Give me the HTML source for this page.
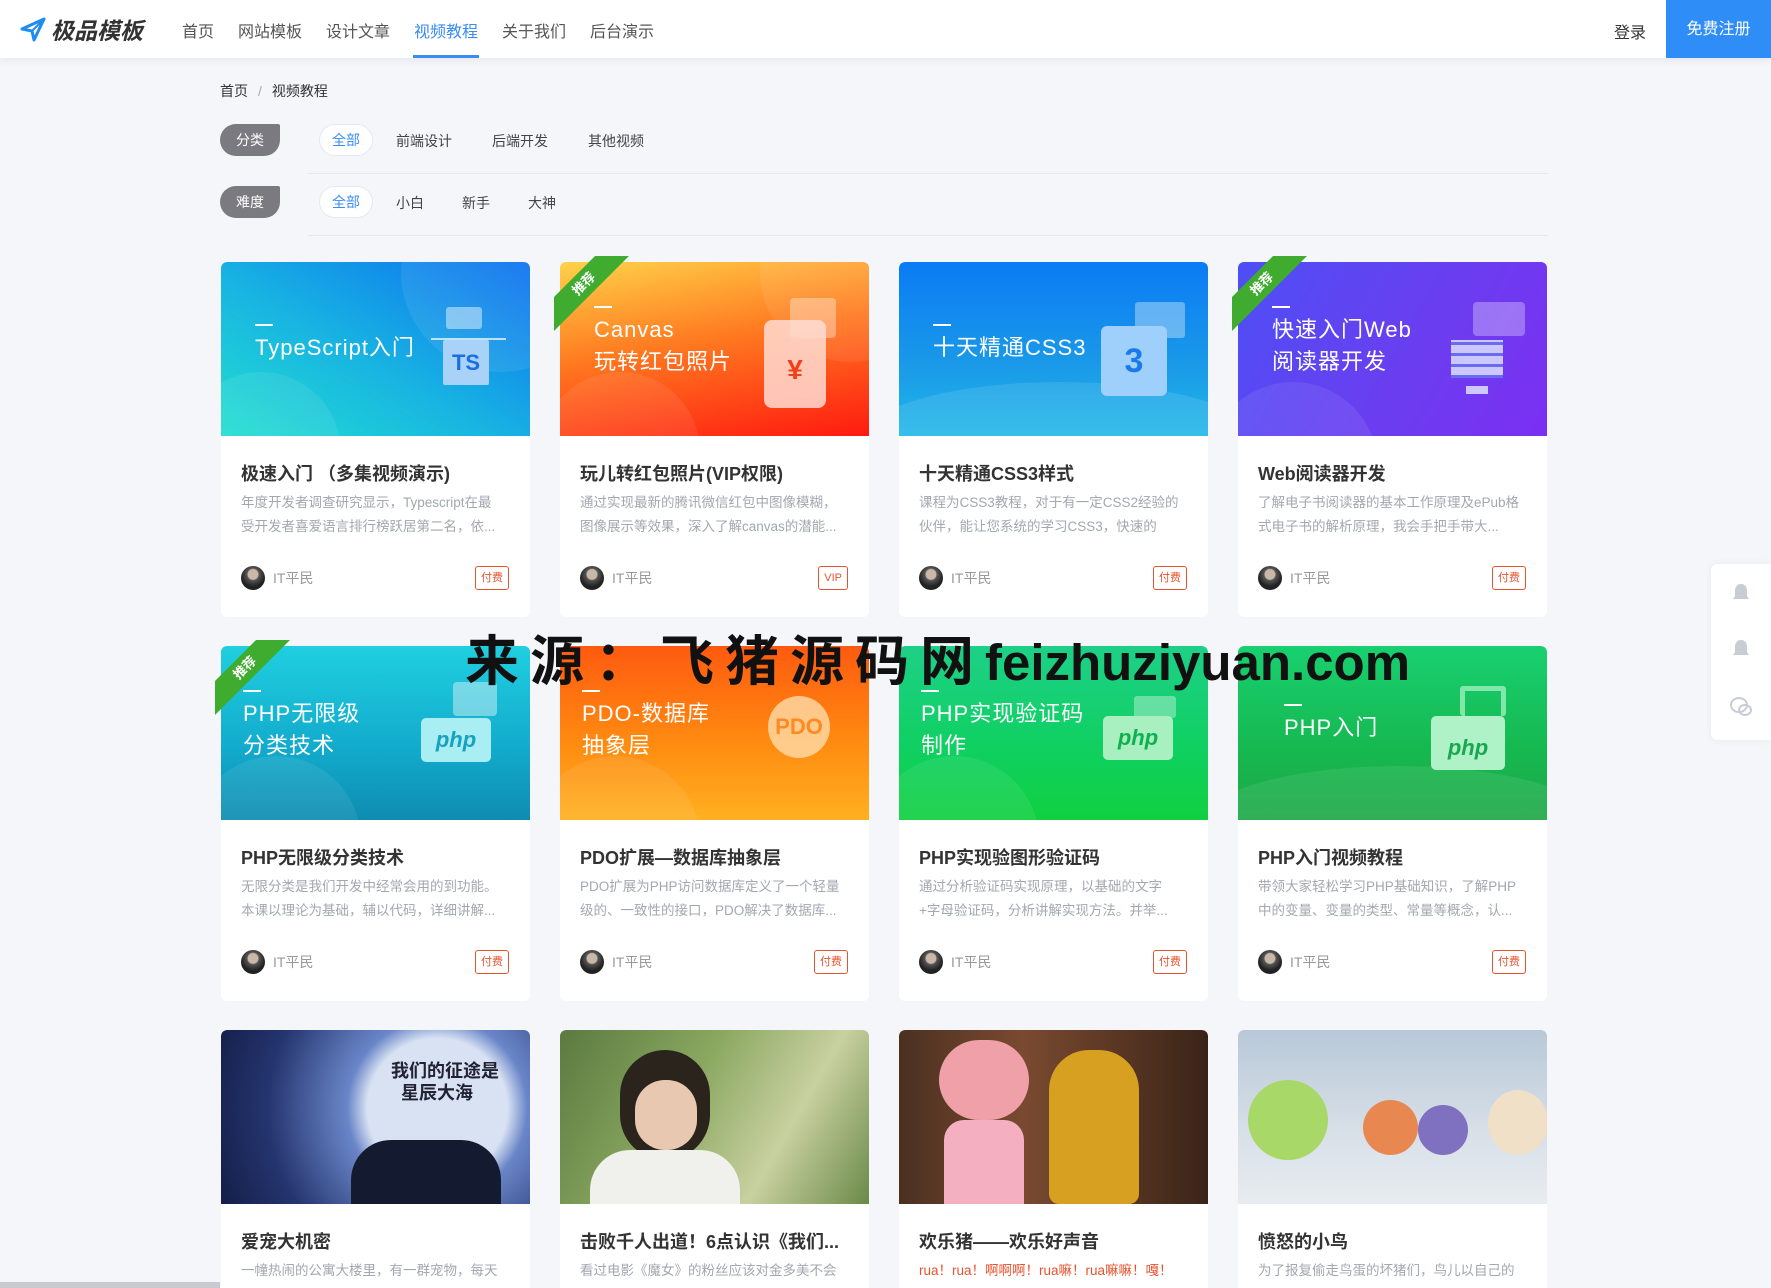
<!DOCTYPE html>
<html style="height:1288px;overflow:hidden"><head><meta charset="utf-8">
<style>
*{margin:0;padding:0;box-sizing:border-box}
body{width:1771px;height:1288px;overflow:hidden;background:#f5f6fa;font-family:"Liberation Sans","Noto Sans CJK SC",sans-serif;position:relative;color:#333}
.hdr{position:absolute;left:0;top:0;width:1771px;height:58px;background:#fff;box-shadow:0 2px 8px rgba(0,20,60,.07);z-index:2}
.logo{position:absolute;left:20px;top:12px;height:34px;display:flex;align-items:center}
.logo b{font-size:23px;font-style:italic;color:#333;letter-spacing:0;margin-left:5px}
.nav a{position:absolute;top:18px;font-size:16px;color:#555;text-decoration:none}
.nav a.on{color:#3a8cf5}
.uline{position:absolute;left:413px;top:55px;width:66px;height:3px;background:#3a8cf5}
.login{position:absolute;left:1614px;top:19px;font-size:16px;color:#333}
.reg{position:absolute;left:1666px;top:0;width:105px;height:58px;background:#2e8df7;color:#fff;font-size:16px;text-align:center;line-height:60px}
.bc{position:absolute;left:220px;top:81px;font-size:14px;color:#333}
.bc span{color:#aaa;margin:0 10px}
.lab{position:absolute;left:220px;width:60px;height:32px;background:#7b7a80;color:#fff;font-size:14px;line-height:32px;text-align:center;border-radius:16px 2px 16px 16px}
.opt{position:absolute;font-size:14px;color:#444}
.all{position:absolute;left:319px;width:54px;height:32px;border:1px solid #e3e8f5;border-radius:16px;background:#fff;color:#3a8cf5;font-size:14px;line-height:30px;text-align:center}
.sep{position:absolute;left:308px;width:1240px;height:1px;background:#e6e8ee}
.card{position:absolute;width:309px;height:355px;background:#fff;border-radius:6px;overflow:hidden}
.card.r3{height:258px;border-radius:6px 6px 0 0}
.img{position:relative;height:174px;overflow:hidden;border-radius:6px 6px 0 0}
.img .c1{position:absolute;border-radius:50%;background:rgba(255,255,255,.08)}
.tt{position:absolute;left:34px;color:#fff;font-size:22px;line-height:32px;letter-spacing:1px}
.tt:before{content:"";display:block;width:18px;height:2px;background:#fff;margin-bottom:6px}
.ic{position:absolute}
.ttl{position:absolute;left:20px;top:198px;font-size:18px;font-weight:bold;color:#333;white-space:nowrap}
.ds{position:absolute;left:20px;top:229px;width:262px;font-size:13.5px;color:#a3a7b0;line-height:24px;height:48px;overflow:hidden}
.r3 .ds{height:29px}
.au{position:absolute;left:20px;top:304px;display:flex;align-items:center;font-size:14px;color:#999}
.av{width:24px;height:24px;border-radius:50%;background:radial-gradient(circle at 50% 35%,#c9b7a8 0 5px,#555 6px,#222 12px);margin-right:8px}
.bd{position:absolute;right:21px;top:304px;height:24px;padding:0 5px;border:1px solid #e8532f;border-radius:3px;color:#e8532f;font-size:11px;line-height:22px}
.ribw{position:absolute;left:-6px;top:-6px;width:80px;height:80px;overflow:hidden;z-index:2}
.rib{position:absolute;left:-30px;top:16px;width:120px;height:24px;background:#3fac2f;color:#fff;font-size:13px;text-align:center;line-height:24px;transform:rotate(-45deg);font-weight:bold}
.side{position:absolute;left:1711px;top:564px;width:60px;height:176px;background:#fff;border-radius:6px 0 0 6px;box-shadow:0 0 8px rgba(0,0,0,.06)}
.wm{position:absolute;left:465px;top:632px;font-weight:bold;color:#111;white-space:nowrap;z-index:3;line-height:60px}
.wm .a{font-size:54px;letter-spacing:11px}
.wm .b{font-size:51px;letter-spacing:0}
</style></head><body>
<div class="hdr">
 <div class="logo"><svg width="26" height="26" viewBox="0 0 26 26"><path d="M2 13 L24 3 L14 24 L12 15 Z" fill="none" stroke="#1e8cf0" stroke-width="3" stroke-linejoin="round"/><path d="M12 15 L24 3" stroke="#1e8cf0" stroke-width="2"/></svg><b>极品模板</b></div>
 <div class="nav"><a style="left:182px">首页</a><a style="left:238px">网站模板</a><a style="left:326px">设计文章</a><a class="on" style="left:414px">视频教程</a><a style="left:502px">关于我们</a><a style="left:590px">后台演示</a></div>
 <div class="uline"></div>
 <div class="login">登录</div>
 <div class="reg">免费注册</div>
</div>
<div class="bc">首页<span>/</span>视频教程</div>
<div class="lab" style="top:124px">分类</div>
<div class="all" style="top:124px">全部</div>
<div class="opt" style="left:396px;top:131px">前端设计</div><div class="opt" style="left:492px;top:131px">后端开发</div><div class="opt" style="left:588px;top:131px">其他视频</div>
<div class="sep" style="top:173px"></div>
<div class="lab" style="top:186px">难度</div>
<div class="all" style="top:186px">全部</div>
<div class="opt" style="left:396px;top:193px">小白</div><div class="opt" style="left:462px;top:193px">新手</div><div class="opt" style="left:528px;top:193px">大神</div>
<div class="sep" style="top:235px"></div>

<!-- Row 1 -->
<div class="card" style="left:221px;top:262px"><div class="img" style="background:linear-gradient(30deg,#22dfd0 0%,#18b4e2 45%,#0c6ff0 100%)"><div class="c1" style="left:180px;top:-90px;width:200px;height:200px"></div><div class="c1" style="left:-40px;top:110px;width:160px;height:160px"></div>
<div class="tt" style="top:62px">TypeScript入门</div>
<div class="ic" style="left:225px;top:45px;width:36px;height:22px;background:rgba(255,255,255,.45);border-radius:3px"></div><div class="ic" style="left:222px;top:78px;width:46px;height:45px;background:#a9d2f8;border-radius:2px;color:#1a6ee0;font-weight:bold;font-size:22px;text-align:center;line-height:45px">TS</div><div class="ic" style="left:210px;top:76px;width:75px;height:2px;background:rgba(255,255,255,.7)"></div></div>
<div class="ttl">极速入门 （多集视频演示)</div><div class="ds">年度开发者调查研究显示，Typescript在最受开发者喜爱语言排行榜跃居第二名，依...</div><div class="au"><div class="av"></div>IT平民</div><div class="bd">付费</div></div>

<div class="card" style="left:560px;top:262px;overflow:visible"><div class="img" style="background:linear-gradient(170deg,#ffd24a 0%,#ff7a20 45%,#ff1a10 100%)"><div class="c1" style="left:200px;top:-80px;width:180px;height:180px"></div><div class="c1" style="left:-20px;top:110px;width:160px;height:160px"></div>
<div class="tt" style="top:44px">Canvas<br>玩转红包照片</div>
<div class="ic" style="left:230px;top:36px;width:46px;height:40px;background:rgba(255,255,255,.35);border-radius:4px"></div><div class="ic" style="left:204px;top:58px;width:62px;height:88px;background:rgba(255,220,210,.85);border-radius:8px;color:#f0401a;font-size:28px;font-weight:bold;text-align:center;line-height:100px">¥</div></div>
<div class="ribw"><div class="rib">推荐</div></div>
<div class="ttl">玩儿转红包照片(VIP权限)</div><div class="ds">通过实现最新的腾讯微信红包中图像模糊，图像展示等效果，深入了解canvas的潜能...</div><div class="au"><div class="av"></div>IT平民</div><div class="bd">VIP</div></div>

<div class="card" style="left:899px;top:262px"><div class="img" style="background:linear-gradient(180deg,#0a7bf5 0%,#1a9ae8 60%,#20b8e8 100%)"><div class="c1" style="left:-40px;top:120px;width:400px;height:120px;background:rgba(255,255,255,.1)"></div>
<div class="tt" style="top:62px">十天精通CSS3</div>
<div class="ic" style="left:236px;top:40px;width:50px;height:36px;background:rgba(255,255,255,.35);border-radius:3px"></div><div class="ic" style="left:202px;top:64px;width:66px;height:70px;background:#9fd0fb;border-radius:6px;color:#1a7be8;font-size:34px;font-weight:bold;text-align:center;line-height:70px">3</div></div>
<div class="ttl">十天精通CSS3样式</div><div class="ds">课程为CSS3教程，对于有一定CSS2经验的伙伴，能让您系统的学习CSS3，快速的理...</div><div class="au"><div class="av"></div>IT平民</div><div class="bd">付费</div></div>

<div class="card" style="left:1238px;top:262px;overflow:visible"><div class="img" style="background:linear-gradient(120deg,#4d4ff5 0%,#6a3ef0 55%,#7b2ff2 100%)"><div class="c1" style="left:-30px;top:120px;width:170px;height:170px"></div>
<div class="tt" style="top:44px">快速入门Web<br>阅读器开发</div>
<div class="ic" style="left:235px;top:40px;width:52px;height:34px;background:rgba(255,255,255,.3);border-radius:4px"></div><div class="ic" style="left:205px;top:72px;width:68px;height:50px;background:rgba(220,225,255,.85);border-radius:3px;background-image:repeating-linear-gradient(180deg,transparent 0 8px,#6a6cf0 8px 11px);background-clip:content-box;padding:6px 8px;background-color:rgba(220,225,255,.85)"></div><div class="ic" style="left:228px;top:124px;width:22px;height:8px;background:rgba(220,225,255,.85)"></div></div>
<div class="ribw"><div class="rib">推荐</div></div>
<div class="ttl">Web阅读器开发</div><div class="ds">了解电子书阅读器的基本工作原理及ePub格式电子书的解析原理，我会手把手带大...</div><div class="au"><div class="av"></div>IT平民</div><div class="bd">付费</div></div>

<!-- Row 2 -->
<div class="card" style="left:221px;top:646px;overflow:visible"><div class="img" style="background:linear-gradient(180deg,#20cfe0 0%,#12aacc 60%,#0e8cb0 100%)"><div class="c1" style="left:-30px;top:110px;width:170px;height:170px"></div>
<div class="tt" style="top:44px;left:22px">PHP无限级<br>分类技术</div>
<div class="ic" style="left:232px;top:36px;width:44px;height:34px;background:rgba(255,255,255,.4);border-radius:4px"></div><div class="ic" style="left:200px;top:72px;width:70px;height:44px;background:#a8eef2;border-radius:5px;color:#1aa0c0;font-style:italic;font-weight:bold;font-size:22px;text-align:center;line-height:44px">php</div></div>
<div class="ribw"><div class="rib">推荐</div></div>
<div class="ttl">PHP无限级分类技术</div><div class="ds">无限分类是我们开发中经常会用的到功能。本课以理论为基础，辅以代码，详细讲解...</div><div class="au"><div class="av"></div>IT平民</div><div class="bd">付费</div></div>

<div class="card" style="left:560px;top:646px"><div class="img" style="background:linear-gradient(180deg,#ff5a10 0%,#ff8a10 55%,#ffb020 100%)"><div class="c1" style="left:-30px;top:110px;width:170px;height:170px"></div>
<div class="tt" style="top:44px;left:22px">PDO-数据库<br>抽象层</div>
<div class="ic" style="left:208px;top:50px;width:62px;height:62px;border-radius:50%;background:rgba(255,220,170,.8);color:#ff8a20;font-weight:bold;font-size:22px;text-align:center;line-height:62px">PDO</div></div>
<div class="ttl">PDO扩展—数据库抽象层</div><div class="ds">PDO扩展为PHP访问数据库定义了一个轻量级的、一致性的接口，PDO解决了数据库...</div><div class="au"><div class="av"></div>IT平民</div><div class="bd">付费</div></div>

<div class="card" style="left:899px;top:646px"><div class="img" style="background:linear-gradient(180deg,#1ed088 0%,#0fd060 60%,#10d040 100%)"><div class="c1" style="left:-30px;top:110px;width:170px;height:170px"></div>
<div class="tt" style="top:44px;left:22px">PHP实现验证码<br>制作</div>
<div class="ic" style="left:235px;top:50px;width:42px;height:22px;background:rgba(255,255,255,.35);border-radius:3px"></div><div class="ic" style="left:204px;top:70px;width:70px;height:44px;background:#a8f0c0;border-radius:5px;color:#10b050;font-style:italic;font-weight:bold;font-size:22px;text-align:center;line-height:44px">php</div></div>
<div class="ttl">PHP实现验图形验证码</div><div class="ds">通过分析验证码实现原理，以基础的文字+字母验证码，分析讲解实现方法。并举...</div><div class="au"><div class="av"></div>IT平民</div><div class="bd">付费</div></div>

<div class="card" style="left:1238px;top:646px"><div class="img" style="background:linear-gradient(180deg,#18d070 0%,#16b850 60%,#20a848 100%)"><div class="c1" style="left:-40px;top:120px;width:400px;height:120px;background:rgba(255,255,255,.08)"></div>
<div class="tt" style="top:58px;left:46px">PHP入门</div>
<div class="ic" style="left:222px;top:40px;width:46px;height:30px;border:5px solid rgba(200,255,220,.6);border-bottom:none;border-radius:3px"></div><div class="ic" style="left:193px;top:70px;width:74px;height:54px;background:#b0f2c8;border-radius:5px;color:#18a850;font-style:italic;font-weight:bold;font-size:22px;text-align:center;line-height:64px">php</div></div>
<div class="ttl">PHP入门视频教程</div><div class="ds">带领大家轻松学习PHP基础知识，了解PHP中的变量、变量的类型、常量等概念，认...</div><div class="au"><div class="av"></div>IT平民</div><div class="bd">付费</div></div>

<!-- Row 3 -->
<div class="card r3" style="left:221px;top:1030px"><div class="img" style="background:radial-gradient(circle at 70% 45%,#d8e2f2 0 70px,#6a86c8 90px,#24346e 170px,#141e48 100%)"><div style="position:absolute;left:170px;top:30px;font-size:18px;font-weight:bold;color:#223;line-height:22px">我们的征途是<br>&nbsp;&nbsp;星辰大海</div><div style="position:absolute;left:130px;top:110px;width:150px;height:64px;background:#141a30;border-radius:40px 40px 0 0"></div></div>
<div class="ttl">爱宠大机密</div><div class="ds">一幢热闹的公寓大楼里，有一群宠物，每天</div></div>
<div class="card r3" style="left:560px;top:1030px"><div class="img" style="background:linear-gradient(120deg,#5a7a40 0%,#8aa860 40%,#c8d0a0 70%,#6a8a48 100%)"><div style="position:absolute;left:60px;top:20px;width:90px;height:110px;border-radius:45px;background:#2a241c"></div><div style="position:absolute;left:75px;top:50px;width:62px;height:70px;border-radius:30px;background:#e8c8b0"></div><div style="position:absolute;left:30px;top:120px;width:150px;height:60px;background:#f0f0ec;border-radius:40px 40px 0 0"></div></div>
<div class="ttl">击败千人出道！6点认识《我们...</div><div class="ds">看过电影《魔女》的粉丝应该对金多美不会</div></div>
<div class="card r3" style="left:899px;top:1030px"><div class="img" style="background:linear-gradient(90deg,#4a3020 0%,#7a4a30 40%,#3a2418 100%)"><div style="position:absolute;left:40px;top:10px;width:90px;height:80px;border-radius:45px;background:#f0a0a8"></div><div style="position:absolute;left:45px;top:90px;width:80px;height:84px;border-radius:20px 20px 0 0;background:#f4b0c0"></div><div style="position:absolute;left:150px;top:20px;width:90px;height:154px;border-radius:40px 40px 10px 10px;background:#d8a020"></div></div>
<div class="ttl">欢乐猪——欢乐好声音</div><div class="ds" style="color:#e8532f">rua！rua！啊啊啊！rua嘛！rua嘛嘛！嘎！</div></div>
<div class="card r3" style="left:1238px;top:1030px"><div class="img" style="background:linear-gradient(180deg,#b8c8d8 0%,#d8e0e8 60%,#e8ecf0 100%)"><div style="position:absolute;left:10px;top:50px;width:80px;height:80px;border-radius:50%;background:#a8d868"></div><div style="position:absolute;left:125px;top:70px;width:55px;height:55px;border-radius:50%;background:#e88850"></div><div style="position:absolute;left:180px;top:75px;width:50px;height:50px;border-radius:50%;background:#8070c0"></div><div style="position:absolute;left:250px;top:60px;width:60px;height:65px;border-radius:50%;background:#f0e0c8"></div></div>
<div class="ttl">愤怒的小鸟</div><div class="ds">为了报复偷走鸟蛋的坏猪们，鸟儿以自己的</div></div>

<div class="side">
 <svg style="position:absolute;left:20px;top:18px" width="20" height="22" viewBox="0 0 20 22"><path d="M10 2C6 2 4 5 4 9v5l-2 3h16l-2-3V9c0-4-2-7-6-7z" fill="#c8ccd4"/></svg>
 <svg style="position:absolute;left:20px;top:74px" width="20" height="22" viewBox="0 0 20 22"><path d="M10 2C6 2 4 5 4 9v5l-2 3h16l-2-3V9c0-4-2-7-6-7z" fill="#c8ccd4"/></svg>
 <svg style="position:absolute;left:18px;top:132px" width="24" height="22" viewBox="0 0 24 22"><ellipse cx="10" cy="9" rx="8" ry="7" fill="none" stroke="#c8ccd4" stroke-width="2"/><ellipse cx="16" cy="14" rx="6" ry="5" fill="none" stroke="#c8ccd4" stroke-width="2"/></svg>
</div>
<div class="wm"><span class="a">来源：飞猪源码网</span><span class="b">feizhuziyuan.com</span></div>
<div style="position:absolute;left:0;top:1282px;width:220px;height:6px;background:#c8cad0"></div>
</body></html>
